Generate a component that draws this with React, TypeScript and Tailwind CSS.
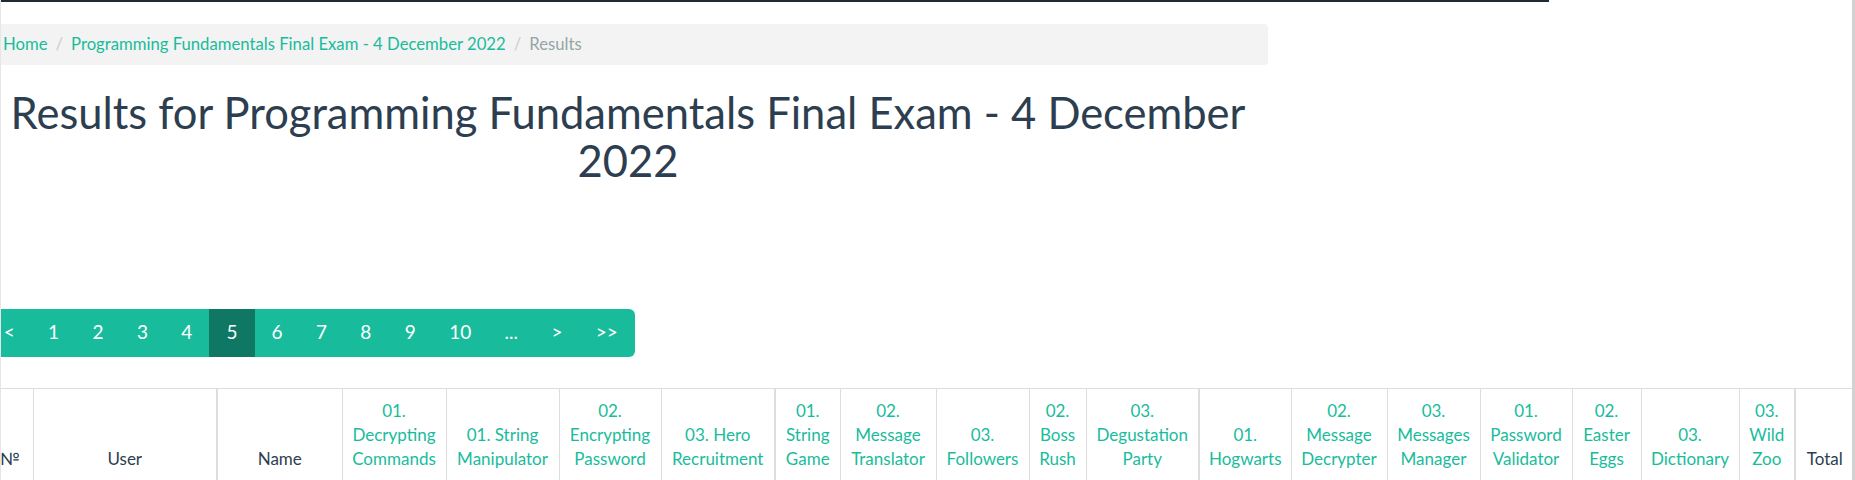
import React from "react";

type Col = { lines: string[]; w: number; link?: boolean; thick?: boolean };

const cols: Col[] = [
  { lines: ["№"], w: 46 },
  { lines: ["User"], w: 184, thick: true },
  { lines: ["Name"], w: 125 },
  { lines: ["01.", "Decrypting", "Commands"], w: 104, link: true },
  { lines: ["01. String", "Manipulator"], w: 113, link: true },
  { lines: ["02.", "Encrypting", "Password"], w: 102, link: true },
  { lines: ["03. Hero", "Recruitment"], w: 114, link: true, thick: true },
  { lines: ["01.", "String", "Game"], w: 65, link: true },
  { lines: ["02.", "Message", "Translator"], w: 96, link: true },
  { lines: ["03.", "Followers"], w: 93, link: true },
  { lines: ["02.", "Boss", "Rush"], w: 57, link: true },
  { lines: ["03.", "Degustation", "Party"], w: 113, link: true, thick: true },
  { lines: ["01.", "Hogwarts"], w: 92, link: true },
  { lines: ["02.", "Message", "Decrypter"], w: 96, link: true },
  { lines: ["03.", "Messages", "Manager"], w: 93, link: true },
  { lines: ["01.", "Password", "Validator"], w: 92, link: true },
  { lines: ["02.", "Easter", "Eggs"], w: 69, link: true },
  { lines: ["03.", "Dictionary"], w: 98, link: true },
  { lines: ["03.", "Wild", "Zoo"], w: 56, link: true, thick: true },
  { lines: ["Total"], w: 59 },
];

const pages = ["<", "1", "2", "3", "4", "5", "6", "7", "8", "9", "10", "...", ">", ">>"];

export default function App() {
  return (
    <div className="flex w-[1855px] h-[480px] overflow-hidden bg-white font-['Lato',sans-serif] text-[#2c3e50]">
      <div className="w-[1852px] overflow-hidden border-l border-[#e6e6e6]">
        {/* navbar bottom edge */}
        <div className="h-[2px] w-[1548px] bg-[#1f2b31]" />

        {/* Breadcrumb */}
        <div className="mt-[22px] -ml-[13px] w-[1280px] h-[41px] rounded-[4px] bg-[#f3f3f3] flex items-center px-[15px] text-[16.7px]">
          <a className="text-[#18bc9c]">Home</a>
          <span className="px-[8px] text-[#cccccc]">/</span>
          <a className="text-[#18bc9c]">Programming Fundamentals Final Exam - 4 December 2022</a>
          <span className="px-[8px] text-[#cccccc]">/</span>
          <span className="text-[#95a5a6]">Results</span>
        </div>

        {/* Title */}
        <h1 className="-ml-[13px] w-[1280px] mt-[24px] text-center text-[43.5px] leading-[1.1] font-normal">
          Results for Programming Fundamentals Final Exam - 4 December 2022
        </h1>

        {/* Pagination */}
        <div className="mt-[124px] -ml-[14px] flex w-max h-[48px] rounded-r-[6px] bg-[#18bc9c] overflow-hidden text-white text-[19px]">
          {pages.map((p) => (
            <span
              key={p}
              className={
                p === "5"
                  ? "flex items-center px-[17.4px] bg-[#0f7864]"
                  : "flex items-center px-[16.7px]"
              }
            >
              {p}
            </span>
          ))}
        </div>

        {/* Results table header */}
        <table className="mt-[31px] -ml-[14px] w-[1867px] table-fixed border-collapse text-[17px] leading-[24.3px]">
          <thead>
            <tr>
              {cols.map((c, i) => (
                <th
                  key={i}
                  style={{ width: c.w }}
                  className={
                    "align-bottom text-center font-normal px-[6px] pt-[10px] pb-[8px] border-t border-[#dddddd] " +
                    (c.thick ? "border-r-2 " : "border-r ") +
                    (c.link ? "text-[#18bc9c]" : "text-[#2c3e50]")
                  }
                >
                  {c.lines.map((l, j) => (
                    <div key={j} className="whitespace-nowrap">
                      {l}
                    </div>
                  ))}
                </th>
              ))}
            </tr>
          </thead>
        </table>
      </div>
      <div className="w-[3px] bg-[#d2d2d2]" />
    </div>
  );
}
